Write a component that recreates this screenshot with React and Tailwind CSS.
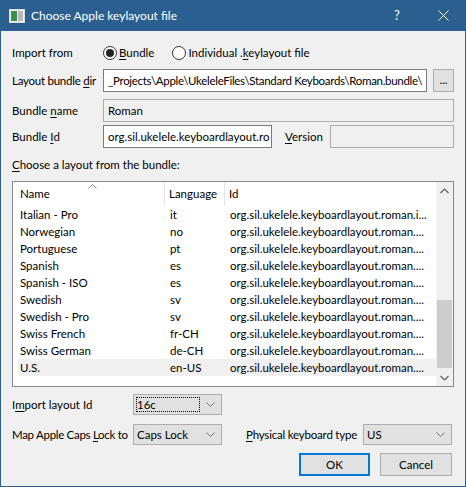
import React from "react";

const rows = [
  ["Italian - Pro", "it", "org.sil.ukelele.keyboardlayout.roman.i..."],
  ["Norwegian", "no", "org.sil.ukelele.keyboardlayout.roman...."],
  ["Portuguese", "pt", "org.sil.ukelele.keyboardlayout.roman...."],
  ["Spanish", "es", "org.sil.ukelele.keyboardlayout.roman...."],
  ["Spanish - ISO", "es", "org.sil.ukelele.keyboardlayout.roman...."],
  ["Swedish", "sv", "org.sil.ukelele.keyboardlayout.roman...."],
  ["Swedish - Pro", "sv", "org.sil.ukelele.keyboardlayout.roman...."],
  ["Swiss French", "fr-CH", "org.sil.ukelele.keyboardlayout.roman...."],
  ["Swiss German", "de-CH", "org.sil.ukelele.keyboardlayout.roman...."],
  ["U.S.", "en-US", "org.sil.ukelele.keyboardlayout.roman...."],
];

function U({ children }) {
  return <span className="underline underline-offset-2">{children}</span>;
}

function Chevron({ up }) {
  return (
    <svg width="9" height="6" viewBox="0 0 9 6" className="block">
      <path
        d={up ? "M0.5 5 L4.5 1 L8.5 5" : "M0.5 1 L4.5 5 L8.5 1"}
        fill="none"
        stroke="#606060"
        strokeWidth="1.2"
      />
    </svg>
  );
}

function Combo({ value, focus }) {
  return (
    <div className="w-[89px] shrink-0 h-[21px] bg-[#e1e1e1] border border-[#adadad] flex items-center pl-[2px] pr-[6px]">
      <div className={`flex-1 h-[15px] flex items-center pl-[1px] ${focus ? "outline-1 outline-dotted outline-black -outline-offset-1" : ""}`}>
        <span className="leading-none">{value}</span>
      </div>
      <svg width="9" height="5" viewBox="0 0 9 5" className="ml-[6px]">
        <path d="M0.5 0.5 L4.5 4.5 L8.5 0.5" fill="none" stroke="#707070" strokeWidth="1" />
      </svg>
    </div>
  );
}

export default function App() {
  return (
    <div className="w-[466px] h-[487px] flex flex-col font-['Lato',sans-serif] text-[11.5px] text-black select-none">
      {/* Title bar */}
      <div className="h-[31px] bg-[#2b5f8f] flex items-center text-white shrink-0">
        <svg width="16" height="14" viewBox="0 0 16 14" className="ml-[9px]">
          <rect x="0.5" y="0.5" width="15" height="13" fill="#f4f4f4" stroke="#d8d8d8" />
          <rect x="2" y="2" width="6" height="10" fill="#3f8f4f" />
          <rect x="9" y="2" width="5" height="10" fill="#b8b8b8" />
        </svg>
        <span className="ml-[6px] text-[12px]">Choose Apple keylayout file</span>
        <div className="ml-auto flex h-full">
          <div className="w-[46px] flex items-center justify-center text-[13px]">?</div>
          <div className="w-[46px] flex items-center justify-center">
            <svg width="11" height="11" viewBox="0 0 11 11">
              <path d="M0.5 0.5 L10.5 10.5 M10.5 0.5 L0.5 10.5" stroke="white" strokeWidth="1" />
            </svg>
          </div>
        </div>
      </div>

      {/* Body */}
      <div className="flex-1 bg-[#f0f0f0] border-x border-b border-[#2b5f8f] px-[11px] flex flex-col">
        {/* Import from */}
        <div className="mt-[11px] h-[22px] flex items-center">
          <span className="w-[91px] shrink-0">Import from</span>
          <div className="flex items-center">
            <span className="w-[14px] h-[14px] rounded-full border border-[#333] bg-white flex items-center justify-center">
              <span className="w-[8px] h-[8px] rounded-full bg-[#222]" />
            </span>
            <span className="ml-[2px]">
              <U>B</U>undle
            </span>
          </div>
          <div className="flex items-center ml-[18px]">
            <span className="w-[14px] h-[14px] rounded-full border border-[#333] bg-white" />
            <span className="ml-[2px]">
              Individual .<U>k</U>eylayout file
            </span>
          </div>
        </div>

        {/* Layout bundle dir */}
        <div className="mt-[5px] h-[23px] flex items-center">
          <span className="w-[91px] shrink-0 whitespace-nowrap tracking-[-0.25px]">
            Layout bundle <U>d</U>ir
          </span>
          <div className="w-[324px] shrink-0 h-[23px] bg-white border border-[#7a7a7a] px-[4px] flex items-center overflow-hidden whitespace-nowrap tracking-[-0.3px]">
            {"_Projects\\Apple\\UkeleleFiles\\Standard Keyboards\\Roman.bundle\\"}
          </div>
          <div className="ml-[6px] w-[21px] shrink-0 h-[23px] bg-[#e1e1e1] border border-[#adadad] flex items-end justify-center pb-[6px] leading-none">
            ...
          </div>
        </div>

        {/* Bundle name */}
        <div className="mt-[7px] h-[23px] flex items-center">
          <span className="w-[91px] shrink-0">
            Bundle <U>n</U>ame
          </span>
          <div className="flex-1 h-[23px] border border-[#adadad] px-[4px] flex items-center">Roman</div>
        </div>

        {/* Bundle Id / Version */}
        <div className="mt-[3px] h-[23px] flex items-center">
          <span className="w-[91px] shrink-0">
            Bundle <U>I</U>d
          </span>
          <div className="w-[169px] shrink-0 h-[23px] bg-white border border-[#7a7a7a] pl-[4px] flex items-center overflow-hidden whitespace-nowrap">
            org.sil.ukelele.keyboardlayout.ro
          </div>
          <span className="ml-[13px] w-[45px] shrink-0">
            <U>V</U>ersion
          </span>
          <div className="flex-1 h-[23px] border border-[#adadad]" />
        </div>

        {/* Choose label */}
        <div className="mt-[9px] h-[16px] flex items-center">
          <span>
            <U>C</U>hoose a layout from the bundle:
          </span>
        </div>

        {/* Table */}
        <div className="mt-[8px] h-[206px] border border-[#828790] bg-white flex overflow-hidden">
          <div className="flex-1 min-w-0 flex flex-col pl-[5px]">
            <div className="h-[24px] flex relative shrink-0">
              <div className="w-[147px] shrink-0 border-r border-[#e5e5e5] flex items-center pl-[2px] relative">
                Name
                <svg width="9" height="5" viewBox="0 0 9 5" className="absolute left-[70px] top-[2px]">
                  <path d="M0.5 4.5 L4.5 0.5 L8.5 4.5" fill="none" stroke="#8a8a8a" strokeWidth="1" />
                </svg>
              </div>
              <div className="w-[60px] shrink-0 border-r border-[#e5e5e5] flex items-center pl-[4px]">Language</div>
              <div className="flex-1 flex items-center pl-[4px]">Id</div>
            </div>
            {rows.map((r, i) => (
              <div
                key={r[0]}
                className={`h-[17px] flex items-center shrink-0 ${i === rows.length - 1 ? "bg-[#f0f0f0]" : ""}`}
              >
                <div className="w-[147px] shrink-0 pl-[2px] whitespace-nowrap">{r[0]}</div>
                <div className="w-[60px] shrink-0 pl-[5px] whitespace-nowrap">{r[1]}</div>
                <div className="flex-1 min-w-0 pl-[5px] whitespace-nowrap overflow-hidden">{r[2]}</div>
              </div>
            ))}
          </div>
          {/* Scrollbar */}
          <div className="w-[17px] shrink-0 bg-[#f0f0f0] flex flex-col items-center">
            <div className="h-[17px] flex items-center justify-center">
              <Chevron up />
            </div>
            <div className="flex-1 w-full px-[1px] flex flex-col">
              <div className="h-[101px]" />
              <div className="h-[68px] bg-[#cdcdcd]" />
            </div>
            <div className="h-[17px] flex items-center justify-center">
              <Chevron />
            </div>
          </div>
        </div>

        {/* Import layout Id */}
        <div className="mt-[7px] h-[21px] flex items-center">
          <span className="w-[121px] shrink-0">
            I<U>m</U>port layout Id
          </span>
          <Combo value="16c" focus />
        </div>

        {/* Caps lock / Physical keyboard */}
        <div className="mt-[9px] h-[21px] flex items-center">
          <span className="w-[121px] shrink-0 whitespace-nowrap tracking-[-0.3px]">
            Map Apple Caps <U>L</U>ock to
          </span>
          <Combo value="Caps Lock" />
          <span className="ml-[24px] w-[117px] shrink-0 whitespace-nowrap tracking-[-0.2px]">
            <U>P</U>hysical keyboard type
          </span>
          <Combo value="US" />
        </div>

        {/* Buttons */}
        <div className="mt-[8px] h-[23px] flex items-center justify-end pr-[2px] gap-[10px]">
          <div className="w-[71px] h-[23px] bg-[#e1e1e1] border border-[#0078d7] shadow-[inset_0_0_0_1px_#0078d7] flex items-center justify-center">
            OK
          </div>
          <div className="w-[72px] h-[23px] bg-[#e1e1e1] border border-[#adadad] flex items-center justify-center">
            Cancel
          </div>
        </div>
      </div>
    </div>
  );
}
